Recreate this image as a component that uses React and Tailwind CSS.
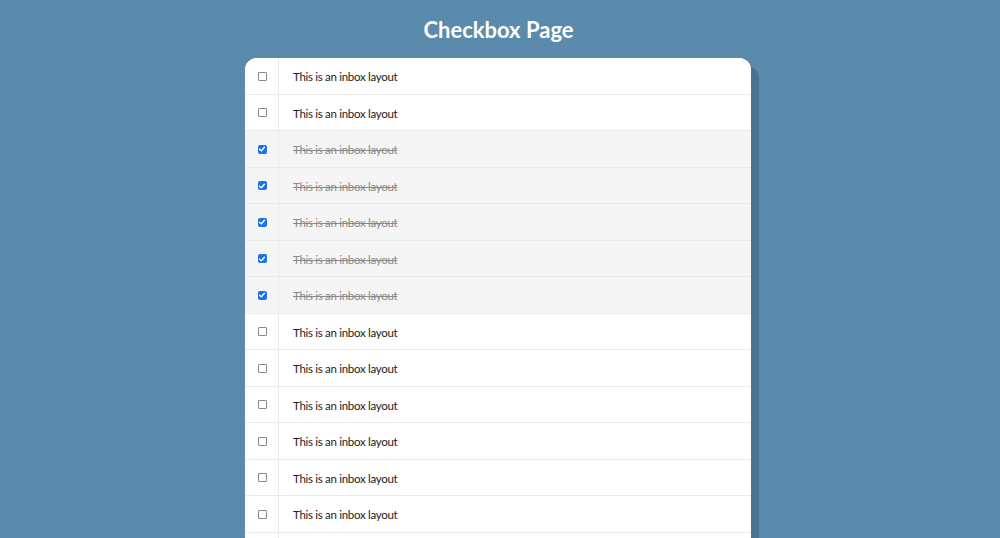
import React, { useState } from 'react';

const initial = [false, false, true, true, true, true, true, false, false, false, false, false, false, false];

const Box = ({ checked }) =>
  checked ? (
    <span className="flex h-[9px] w-[9px] items-center justify-center rounded-[2px] bg-[#1a73e8]">
      <svg viewBox="0 0 10 10" className="h-[8px] w-[8px]" fill="none" stroke="white" strokeWidth="1.8" strokeLinecap="round" strokeLinejoin="round">
        <path d="M2 5.2 L4.2 7.3 L8 2.8" />
      </svg>
    </span>
  ) : (
    <span className="block h-[9px] w-[9px] rounded-[1px] border border-[#8a8a8a] bg-white" />
  );

const App = () => {
  const [items, setItems] = useState(initial);
  const toggle = (i) => setItems(items.map((v, j) => (j === i ? !v : v)));

  return (
    <div className="min-h-screen h-[538px] overflow-hidden bg-[#5b8bac] font-['Lato',sans-serif]">
      <h1 className="pt-[15px] pr-[3px] text-center text-[22px] font-bold leading-[30px] text-white">Checkbox Page</h1>
      <div className="mx-auto mt-[13px] w-[510px]">
        <div className="w-[506px] overflow-hidden rounded-t-[12px] bg-white shadow-[8px_8px_0_0_#4a7391]">
          {items.map((checked, i) => (
            <div
              key={i}
              onClick={() => toggle(i)}
              className={`flex h-[36.5px] cursor-pointer items-stretch border-b border-[#ebebeb] ${checked ? 'bg-[#f5f5f5]' : 'bg-white'}`}
            >
              <div className="flex w-[34px] items-center justify-center border-r border-[#ebebeb] pl-[1px] pt-[1px]">
                <Box checked={checked} />
              </div>
              <div className={`flex items-center pl-[14px] pt-[2px] text-[11.5px] tracking-[-0.3px] ${checked ? 'text-[#8a8a8a] line-through' : 'text-[#222222]'}`}>
                This is an inbox layout
              </div>
            </div>
          ))}
        </div>
      </div>
    </div>
  );
};

export default App;
